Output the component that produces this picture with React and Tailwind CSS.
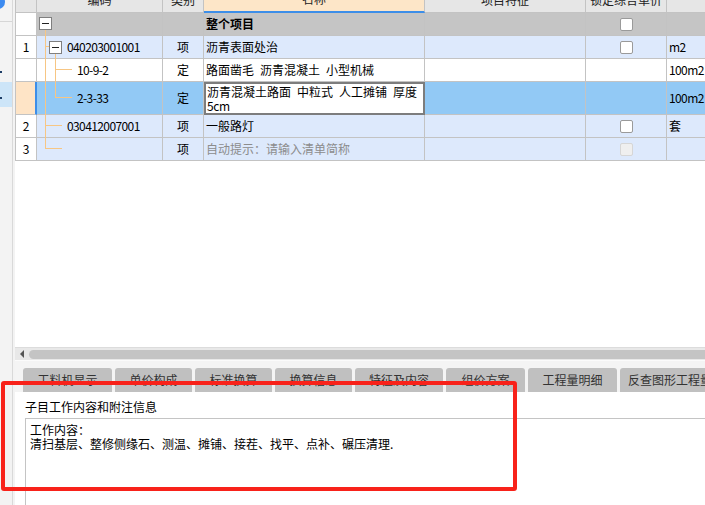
import React from "react";

const COLS = [21, 126, 41, 221, 161, 81, 140];
const cellBase = "shrink-0 border-r border-b border-[#c3c3c3] flex items-center";

function Checkbox({ disabled }) {
  return (
    <span
      className={
        disabled
          ? "block w-[13px] h-[13px] rounded-[2px] border border-[#d6d6d6] bg-[#efefef]"
          : "block w-[13px] h-[13px] rounded-[2px] border border-[#9a9a9a] bg-white"
      }
    />
  );
}

const SP = "\u2002";

const ROWS = [
  { num: "", code: "", lvl: 0, type: "", name: "整个项目", bold: true, lock: true, unit: "", bg: "bg-[#c5c5c5]", h: "h-[23px]" },
  { num: "1", code: "040203001001", lvl: 1, type: "项", name: "沥青表面处治", lock: true, unit: "m2", bg: "bg-[#dde9fc]", h: "h-[23px]" },
  { num: "", code: "10-9-2", lvl: 2, type: "定", name: "路面凿毛" + SP + "沥青混凝土" + SP + "小型机械", lock: false, unit: "100m2", bg: "bg-white", h: "h-[23px]" },
  { num: "", code: "2-3-33", lvl: 2, type: "定", name: "", lock: false, unit: "100m2", bg: "bg-[#92c9f5]", h: "h-[33px]", sel: true },
  { num: "2", code: "030412007001", lvl: 1, type: "项", name: "一般路灯", lock: true, unit: "套", bg: "bg-[#dde9fc]", h: "h-[23px]" },
  { num: "3", code: "", lvl: 1, type: "项", name: "自动提示：请输入清单简称", hint: true, lock: true, lockDisabled: true, unit: "", bg: "bg-[#dde9fc]", h: "h-[23px]" },
];

const TABS = [
  ["工料机显示", 89],
  ["单价构成", 77],
  ["标准换算", 77],
  ["换算信息", 77],
  ["特征及内容", 88],
  ["组价方案", 79],
  ["工程量明细", 89],
  ["反查图形工程量", 100],
];

function Row({ r }) {
  const pl = r.lvl === 2 ? "pl-[40px]" : "pl-[30px]";
  return (
    <div className={"flex " + r.h}>
      <div
        className={
          "shrink-0 h-full border-b border-[#c3c3c3] flex items-center justify-center " +
          (r.sel ? "bg-[#fee4c6] border-r-2 border-r-[#3d8ee8]" : "bg-white border-r")
        }
        style={{ width: COLS[0] }}
      >
        {r.num}
      </div>
      <div className={cellBase + " h-full tracking-[-0.6px] " + r.bg + " " + pl} style={{ width: COLS[1] }}>
        {r.code}
      </div>
      <div className={cellBase + " h-full justify-center " + r.bg} style={{ width: COLS[2] }}>
        {r.type}
      </div>
      {r.sel ? (
        <div
          className="shrink-0 h-full border-2 border-[#7d7d7d] bg-white pl-[1px] leading-[14px] flex flex-col justify-center"
          style={{ width: COLS[3] }}
        >
          <span>{"沥青混凝土路面" + SP + "中粒式" + SP + "人工摊铺" + SP + "厚度"}</span>
          <span className="tracking-[-0.4px]">5cm</span>
        </div>
      ) : (
        <div
          className={
            cellBase +
            " h-full pl-[2px] " +
            r.bg +
            (r.bold ? " font-bold" : "") +
            (r.hint ? " text-[#8c8c8c]" : "")
          }
          style={{ width: COLS[3] }}
        >
          {r.name}
        </div>
      )}
      <div className={cellBase + " h-full " + r.bg} style={{ width: COLS[4] }} />
      <div className={cellBase + " h-full justify-center " + r.bg} style={{ width: COLS[5] }}>
        {r.lock ? <Checkbox disabled={r.lockDisabled} /> : null}
      </div>
      <div className={cellBase + " h-full pl-[2px] tracking-[-0.6px] " + r.bg} style={{ width: COLS[6] }}>
        {r.unit}
      </div>
    </div>
  );
}

export default function App() {
  const headers = ["", "编码", "类别", "名称", "项目特征", "锁定综合单价", "单位"];
  return (
    <div className="relative w-[705px] h-[505px] overflow-hidden flex bg-[#f3f3f3] text-[12px] text-black font-['Noto_Sans_CJK_SC',sans-serif]">
      {/* left strip */}
      <aside className="relative shrink-0 w-[13px] h-full border-r border-[#d9d9d9] bg-[#f3f3f3] flex flex-col">
        <div className="absolute left-[-9px] top-[-5px] w-[14px] h-[14px] rounded-full bg-[#3d8bf0]" />
        <div className="h-[22px] border-b border-[#d6d6d6] shrink-0" />
        <div className="h-[60px] shrink-0 flex flex-col">
          <div className="mt-[49px] w-[2px] h-[2px] bg-[#1d3d66]" />
        </div>
        <div className="h-[25px] shrink-0 bg-[#cde5f8] flex flex-col">
          <div className="mt-[15px] w-[2px] h-[2px] bg-[#1d3d66]" />
        </div>
      </aside>

      {/* main column */}
      <div className="flex-1 flex flex-col pl-[2px] min-w-0">
        {/* table panel */}
        <div className="relative h-[347px] shrink-0 bg-white overflow-hidden">
          <div className="border-l border-[#c3c3c3] w-max">
            <div className="flex h-[26px] -mt-[13px]">
              {headers.map((h, i) => (
                <div
                  key={i}
                  className={
                    "shrink-0 h-full border-r flex items-center justify-center text-[#222] " +
                    (i === 3
                      ? "bg-[#fde6c8] border-[#c3c3c3] border-b-2 border-b-[#3d8ee8]"
                      : "bg-[#e6e6e6] border-[#c3c3c3] border-b")
                  }
                  style={{ width: COLS[i] }}
                >
                  {h}
                </div>
              ))}
            </div>
            {ROWS.map((r, i) => (
              <Row key={i} r={r} />
            ))}
          </div>
          {/* tree lines */}
          <svg className="absolute left-0 top-0 pointer-events-none" width="690" height="347">
            <g transform="translate(-15,0)" shapeRendering="crispEdges">
              <g stroke="#f7c684" strokeWidth="1">
                <line x1="45.5" y1="29" x2="45.5" y2="149" />
                <line x1="45" y1="46.5" x2="50" y2="46.5" />
                <line x1="45" y1="125.5" x2="62" y2="125.5" />
                <line x1="45" y1="148.5" x2="62" y2="148.5" />
                <line x1="55.5" y1="53" x2="55.5" y2="98" />
                <line x1="55" y1="69.5" x2="72" y2="69.5" />
                <line x1="55" y1="97.5" x2="72" y2="97.5" />
              </g>
              <rect x="39.5" y="17.5" width="12" height="12" fill="#fff" stroke="#7f7f7f" />
              <line x1="42" y1="23.5" x2="49" y2="23.5" stroke="#222" />
              <rect x="49.5" y="41.5" width="12" height="12" fill="#fff" stroke="#7f7f7f" />
              <line x1="52" y1="47.5" x2="59" y2="47.5" stroke="#222" />
            </g>
          </svg>
        </div>

        {/* horizontal scrollbar */}
        <div className="h-[13px] shrink-0 bg-[#e8e8e8] border-t border-[#dcdcdc] flex items-center">
          <svg width="14" height="12" className="shrink-0">
            <polygon points="5,6 9,2 9,10" fill="#555" />
          </svg>
          <div className="flex-1 h-[9px] rounded-l-full bg-[#c4c4c4]" />
        </div>

        {/* tab strip */}
        <div className="h-[32px] shrink-0 bg-[#f4f4f4] border-t border-[#fbfbfb] pt-[7px] pl-[8px] flex gap-[3px]">
          {TABS.map(([t, w]) => (
            <div
              key={t}
              className="shrink-0 h-[24px] rounded-t-[3px] bg-[#c0c0c0] text-[#333] flex items-center justify-center whitespace-nowrap overflow-hidden"
              style={{ width: w }}
            >
              {t}
            </div>
          ))}
        </div>

        {/* content panel */}
        <div className="flex-1 bg-white flex flex-col pl-[10px]">
          <div className="pt-[8px] h-[22px] leading-[14px] shrink-0">子目工作内容和附注信息</div>
          <div className="mt-[4px] flex-1 border-t border-l border-[#c4c4c4] pl-[4px] pt-[4px] leading-[13.5px]">
            <div>工作内容：</div>
            <div>清扫基层、整修侧缘石、测温、摊铺、接茬、找平、点补、碾压清理.</div>
          </div>
        </div>
      </div>

      {/* red highlight overlay */}
      <div className="absolute left-[1px] top-[381px] w-[516px] h-[110px] border-4 border-[#f8221a] rounded-[3px] pointer-events-none" />
    </div>
  );
}
